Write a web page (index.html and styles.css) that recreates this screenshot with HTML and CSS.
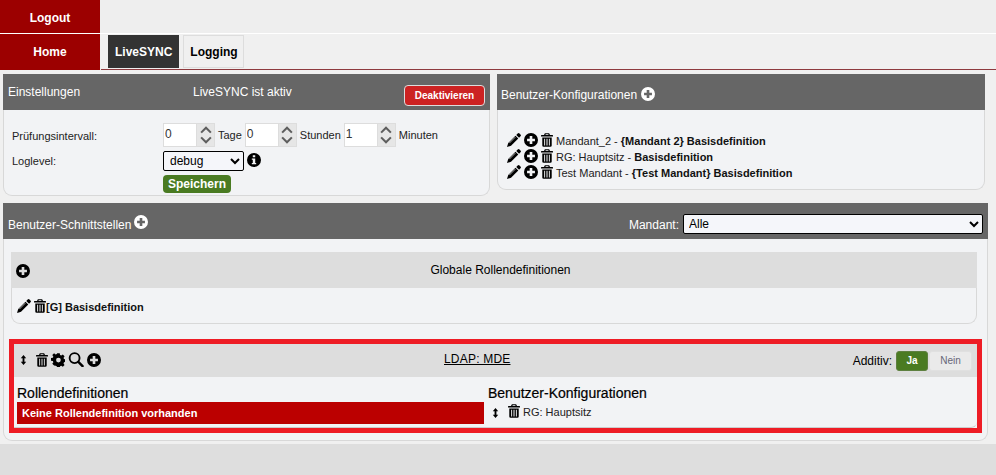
FILE: index.html
```html
<!DOCTYPE html>
<html lang="de">
<head>
<meta charset="utf-8">
<title>LiveSYNC</title>
<link rel="stylesheet" href="styles.css">
</head>
<body>
<svg class="defs" width="0" height="0">
  <symbol id="i-trash" viewBox="0 0 14 16"><path fill-rule="evenodd" d="M4.500 0h5l1 2.200h3a.5.500 0 0 1 .5.500V4H0V2.700a.5.500 0 0 1 .5-.5h3zM5.500 1.200 5.200 2.200h3.600l-.3-1zM1.500 5h11v9.500a1.500 1.500 0 0 1-1.500 1.500H3a1.500 1.500 0 0 1-1.500-1.500zM3.700 6.500v8h1.100v-8zm2.700 0v8h1.200v-8zm2.800 0v8h1.100v-8z"/></symbol>
  <symbol id="i-pencil" viewBox="0 0 16 16"><path d="M12.200.6a1.500 1.500 0 0 1 2.100 0l1.100 1.100a1.500 1.500 0 0 1 0 2.100l-1.600 1.600-3.200-3.200zM9.700 3.100l3.200 3.200-8.300 8.300L0 16l1.400-4.600z"/><path d="M2.700 11.500l6.800-6.800" stroke="#f2f3f5" stroke-width=".8" fill="none"/></symbol>
  <symbol id="i-plus" viewBox="0 0 16 16"><path fill-rule="evenodd" d="M8 0a8 8 0 1 1 0 16A8 8 0 0 1 8 0zM6.500 3.500v3h-3v3h3v3h3v-3h3v-3h-3v-3z"/></symbol>
  <symbol id="i-info" viewBox="0 0 16 16"><path fill-rule="evenodd" d="M8 0a8 8 0 1 1 0 16A8 8 0 0 1 8 0zM6.600 2.500v2.400h2.800V2.500zM5.500 6.300v1.500h1.100v3.500H5.500v1.500h5v-1.500H9.400V6.300z"/></symbol>
  <symbol id="i-gear" viewBox="0 0 16 16"><path fill-rule="evenodd" d="M6.500 0h3l.4 2.100 1.300.6L13 1.500l2 2.100-1.200 1.800.6 1.200 2.100.4v3l-2.100.4-.6 1.300 1.200 1.800-2 2-1.800-1.200-1.300.6-.4 2.100h-3l-.4-2.100-1.300-.6L3 14.100l-2-2 1.200-1.800-.6-1.300L-.5 8.600v-3l2.100-.4.600-1.200L1 2.200l2-2 1.800 1.200 1.300-.6zM8 5.200a2.700 2.700 0 1 0 0 5.400 2.700 2.700 0 0 0 0-5.400z" transform="translate(.5 .2)"/></symbol>
  <symbol id="i-search" viewBox="0 0 16 16"><circle cx="6.500" cy="6.500" r="5.300" fill="none" stroke="currentColor" stroke-width="2"/><path d="M10.500 10.500 15 15" stroke="currentColor" stroke-width="2.600" stroke-linecap="round"/></symbol>
  <symbol id="i-sort" viewBox="0 0 8 14"><path d="M4 0l3.800 4.500H5.300v5h2.500L4 14 .2 9.500h2.500v-5H.2z"/></symbol>
  <symbol id="i-up" viewBox="0 0 16 10"><path d="M1.500 8.500 8 2l6.500 6.500" fill="none" stroke="#5e5e5e" stroke-width="2.800"/></symbol>
  <symbol id="i-down" viewBox="0 0 16 10"><path d="M1.500 1.500 8 8l6.500-6.500" fill="none" stroke="#5e5e5e" stroke-width="2.800"/></symbol>
</svg>

<header class="nav">
  <div class="nav-row nav-row-top">
    <a class="nav-main nav-main-logout">Logout</a>
  </div>
  <div class="nav-row nav-row-bottom">
    <a class="nav-main nav-main-home">Home</a>
    <div class="tabs">
      <a class="tab tab-active">LiveSYNC</a>
      <a class="tab tab-plain">Logging</a>
    </div>
  </div>
</header>

<main class="page">
  <div class="top-panels">
    <section class="panel panel-settings">
      <div class="panel-head settings-head">
        <span class="settings-title">Einstellungen</span>
        <span class="settings-status">LiveSYNC ist aktiv</span>
        <button class="btn-red">Deaktivieren</button>
      </div>
      <div class="panel-body settings-body">
        <div class="form-row">
          <label class="form-label form-label-interval">Prüfungsintervall:</label>
          <div class="spin"><input class="spin-input" value="0"><span class="spin-btns"><svg class="chev"><use href="#i-up"/></svg><svg class="chev"><use href="#i-down"/></svg></span></div>
          <span class="unit">Tage</span>
          <div class="spin"><input class="spin-input" value="0"><span class="spin-btns"><svg class="chev"><use href="#i-up"/></svg><svg class="chev"><use href="#i-down"/></svg></span></div>
          <span class="unit">Stunden</span>
          <div class="spin"><input class="spin-input" value="1"><span class="spin-btns"><svg class="chev"><use href="#i-up"/></svg><svg class="chev"><use href="#i-down"/></svg></span></div>
          <span class="unit">Minuten</span>
        </div>
        <div class="form-row form-row-log">
          <label class="form-label">Loglevel:</label>
          <select class="select select-log"><option>debug</option></select>
          <svg class="ic ic-info"><use href="#i-info"/></svg>
        </div>
        <div class="form-row form-row-save">
          <button class="btn-green">Speichern</button>
        </div>
      </div>
    </section>

    <section class="panel panel-config">
      <div class="panel-head config-head">
        <span>Benutzer-Konfigurationen</span>
        <svg class="ic ic-head"><use href="#i-plus"/></svg>
      </div>
      <div class="panel-body config-body">
        <div class="config-row">
          <svg class="ic"><use href="#i-pencil"/></svg><svg class="ic"><use href="#i-plus"/></svg><svg class="ic ic-trash"><use href="#i-trash"/></svg>
          <span class="config-text">Mandant_2 - <b>{Mandant 2} Basisdefinition</b></span>
        </div>
        <div class="config-row">
          <svg class="ic"><use href="#i-pencil"/></svg><svg class="ic"><use href="#i-plus"/></svg><svg class="ic ic-trash"><use href="#i-trash"/></svg>
          <span class="config-text">RG: Hauptsitz - <b>Basisdefinition</b></span>
        </div>
        <div class="config-row">
          <svg class="ic"><use href="#i-pencil"/></svg><svg class="ic"><use href="#i-plus"/></svg><svg class="ic ic-trash"><use href="#i-trash"/></svg>
          <span class="config-text">Test Mandant - <b>{Test Mandant} Basisdefinition</b></span>
        </div>
      </div>
    </section>
  </div>

  <section class="panel panel-iface">
    <div class="panel-head iface-head">
      <span class="iface-title">Benutzer-Schnittstellen</span>
      <svg class="ic ic-head ic-head-iface"><use href="#i-plus"/></svg>
      <label class="mandant-label">Mandant:</label>
      <select class="select select-mandant"><option>Alle</option></select>
    </div>
    <div class="iface-body">
      <div class="card">
        <div class="card-head">
          <svg class="ic ic-card-plus"><use href="#i-plus"/></svg>
          <span class="card-title">Globale Rollendefinitionen</span>
        </div>
        <div class="card-body">
          <svg class="ic"><use href="#i-pencil"/></svg><svg class="ic ic-trash"><use href="#i-trash"/></svg><span class="card-text">[G] Basisdefinition</span>
        </div>
      </div>

      <div class="ldap">
        <div class="ldap-head">
          <div class="ldap-tools">
            <svg class="ic ic-sort"><use href="#i-sort"/></svg>
            <svg class="ic ic-trash"><use href="#i-trash"/></svg>
            <svg class="ic"><use href="#i-gear"/></svg>
            <svg class="ic ic-search"><use href="#i-search"/></svg>
            <svg class="ic"><use href="#i-plus"/></svg>
          </div>
          <a class="ldap-title">LDAP: MDE</a>
          <div class="additiv">
            <span class="additiv-label">Additiv:</span>
            <span class="toggle toggle-on">Ja</span>
            <span class="toggle toggle-off">Nein</span>
          </div>
        </div>
        <div class="ldap-cols">
          <div class="ldap-col">
            <h3 class="ldap-col-title">Rollendefinitionen</h3>
            <div class="alert">Keine Rollendefinition vorhanden</div>
          </div>
          <div class="ldap-col ldap-col-right">
            <h3 class="ldap-col-title">Benutzer-Konfigurationen</h3>
            <div class="assigned">
              <svg class="ic ic-sort"><use href="#i-sort"/></svg>
              <svg class="ic ic-trash"><use href="#i-trash"/></svg>
              <span class="assigned-text">RG: Hauptsitz</span>
            </div>
          </div>
        </div>
      </div>
    </div>
  </section>
</main>
<div class="footer-band"></div>
</body>
</html>
```

FILE: styles.css
```css
* { box-sizing: border-box; }
html, body { margin: 0; height: 100%; }
body {
  background: #f0f0f0;
  font-family: "Liberation Sans", Arial, sans-serif;
  font-size: 12px;
  color: #000;
  overflow: hidden;
  display: flex;
  flex-direction: column;
}
.defs { position: absolute; }
.nav { flex: none; height: 70px; }
.nav-row { display: flex; }
.nav-row-top { height: 34px; background: #eee; border-bottom: 1px solid #fff; }
.nav-row-bottom { height: 36px; }
.nav-row-bottom::after {
  content: ""; flex: 1; align-self: flex-end; height: 1px; background: #8e3a3e;
}
.nav-main {
  width: 100px; background: #9c0000; color: #fff; font-weight: bold;
  display: flex; align-items: center; justify-content: center; font-size: 12px;
}
.nav-main-logout { padding-top: 2px; }
.nav-main-home { margin-right: 1px; }
.tabs { display: flex; gap: 4px; padding: 1px 0 0 7px; height: 36px; border-bottom: 1px solid #8e3a3e; }
.tab {
  height: 33px; padding: 0 6px; display: flex; align-items: center;
  font-weight: bold; border: 1px solid #ddd; background: #f0f0f0; font-size: 12px;
}
.tab-active { background: #333; border-color: #333; color: #fff; }
.tab-plain { padding-right: 5px; }

.page { flex: none; padding: 4px 8px 0 3px; }
.top-panels { display: flex; gap: 7px; align-items: flex-start; margin-bottom: 7px; }
.panel-settings { width: 487px; }
.panel-config { width: 488px; margin-right: 3px; }
.panel-head {
  background: #666; color: #fff; height: 36px; display: flex; align-items: center;
  font-size: 12px; padding: 0 5px;
}
.panel-body {
  background: #f2f3f5; border: 1px solid #d8d8d8; border-top: 0;
  border-radius: 0 0 9px 9px;
}
.settings-head { padding-left: 5px; }
.settings-title { width: 185px; }
.btn-red {
  margin-left: auto; height: 21px; width: 81px; padding: 0;
  background: #cc2222; color: #fff; border: 1px solid #ddd; border-radius: 4px;
  font: bold 10px "Liberation Sans", Arial, sans-serif; margin-top: 7px;
}
.settings-body { height: 86px; padding: 13px 0 0 8px; }
.form-row { display: flex; align-items: center; }
.form-label { width: 151px; font-size: 11px; color: #222; }
.form-label-interval { padding-top: 1px; }
.spin { display: flex; width: 52px; height: 24px; border: 1px solid #ddd; background: #fff; }
.spin-input {
  width: 32px; border: 0; padding: 0 0 3px 1px; height: 22px; background: #fff;
  font: 12px "Liberation Sans", Arial, sans-serif; color: #333; outline: 0;
}
.spin-btns { flex: 1; background: #e6e6e6; border-left: 1px solid #ddd; display: flex; flex-direction: column; align-items: center; justify-content: center; gap: 2px; }
.chev { width: 12px; height: 8px; display: block; }
.unit { padding: 0 3px; font-size: 11px; color: #222; margin-top: -1px; }
.form-row-log { margin-top: 4px; height: 20px; }
.select {
  font: 12px "Liberation Sans", Arial, sans-serif; color: #000;
  border: 1px solid #000; border-radius: 2px; background: #f5f6fa; height: 20px;
}
.select-log { width: 81px; padding-left: 2px; }
.ic { width: 14px; height: 14px; display: block; fill: #000; color: #000; flex: none; }
.ic-info { margin: -3px 0 0 3px; }
.ic-trash { width: 12px; height: 14px; }
.form-row-save { padding-left: 151px; margin-top: 4px; }
.btn-green {
  width: 68px; height: 18px; padding: 0; border: 0; border-radius: 4px; background: #4a7b22;
  color: #fff; font: bold 12px "Liberation Sans", Arial, sans-serif;
}
.config-head { gap: 4px; padding: 6px 4px 0; }
.ic-head { fill: #fff; margin-top: -3px; }
.config-body { height: 80px; padding: 22px 0 0 9px; }
.config-row { display: flex; align-items: center; height: 16px; gap: 3px; }
.config-text { font-size: 11px; color: #222; margin-top: 1px; }
.config-text b { font-weight: bold; color: #111; }

.panel-iface { width: 985px; }
.iface-head { gap: 3px; padding: 6px 5px 0; }
.iface-title { margin-top: 2px; }
.ic-head-iface { margin-top: -5px; }
.mandant-label { margin-left: auto; margin-right: 1px; margin-top: 2px; }
.select-mandant { width: 300px; padding-left: 1px; }
.iface-body {
  background: #f2f3f5; border: 1px solid #d8d8d8; border-top: 0;
  border-radius: 0 0 9px 9px; height: 202px; padding: 13px 0 0 5px;
}
.card { margin-left: 2px; width: 966px; border: 1px solid #d8d8d8; border-top: 0; border-radius: 0 0 9px 9px; }
.card-head { height: 36px; margin: 0 -1px; background: #ddd; display: flex; align-items: center; padding-left: 5px; }
.ic-card-plus { margin-top: 1px; }
.card-title { flex: 1; text-align: center; font-size: 12px; margin-top: -1px; margin-right: 6px; }
.card-body { height: 35px; display: flex; align-items: center; padding-left: 5px; gap: 3px; }
.card-text { font-size: 11px; font-weight: bold; color: #111; margin-left: -3px; padding-top: 2px; }
.ldap { margin-top: 15px; width: 973px; height: 94px; border: 5px solid #ee1c25; }
.ldap-head { height: 33px; background: #ddd; display: flex; align-items: center; padding: 0 5px; }
.ldap-tools { display: flex; align-items: center; gap: 3px; width: 420px; margin-top: -2px; }
.ldap-tools .ic-sort { width: 7px; height: 10px; margin: 1px 6px 0 1px; }
.ldap-tools .ic-search { width: 16px; height: 15px; }
.ldap-title { font-size: 12px; letter-spacing: .2px; text-decoration: underline; margin-top: -3px; padding-left: 5px; }
.additiv { margin-left: auto; display: flex; align-items: center; gap: 4px; }
.additiv-label { font-size: 12px; }
.toggle { height: 20px; display: flex; align-items: center; justify-content: center; border-radius: 3px; font-size: 10px; }
.toggle-on { width: 32px; background: #4a7b22; color: #fff; font-weight: bold; border: 1px solid #5e8040; }
.toggle-off { width: 43px; background: #eaeaea; color: #667; border: 1px solid #e0e0e0; margin-left: -3px; }
.ldap-cols { display: flex; height: 51px; border-bottom: 1px solid #ccc; border-radius: 0 0 6px 0; background: #f2f3f5; padding: 8px 0 0 3px; }
.ldap-col { width: 471px; }
.ldap-col-title { margin: 0; font-size: 14px; font-weight: normal; -webkit-text-stroke: 0.2px #000; line-height: 16px; }
.alert { background: #bb0000; color: #fff; font-size: 11px; font-weight: bold; height: 22px; line-height: 22px; padding-left: 5px; margin: 1px 4px 0 0; }
.ldap-col-right { flex: 1; }
.assigned { display: flex; align-items: center; gap: 3px; height: 18px; margin-top: 2px; }
.assigned .ic-sort { width: 7px; height: 10px; margin: 2px 6px 0 4px; }
.assigned .ic-trash { margin-top: -3px; }
.assigned-text { font-size: 11px; color: #222; }
.footer-band { flex: 1; margin-top: 3px; background: #dedede; }
```
